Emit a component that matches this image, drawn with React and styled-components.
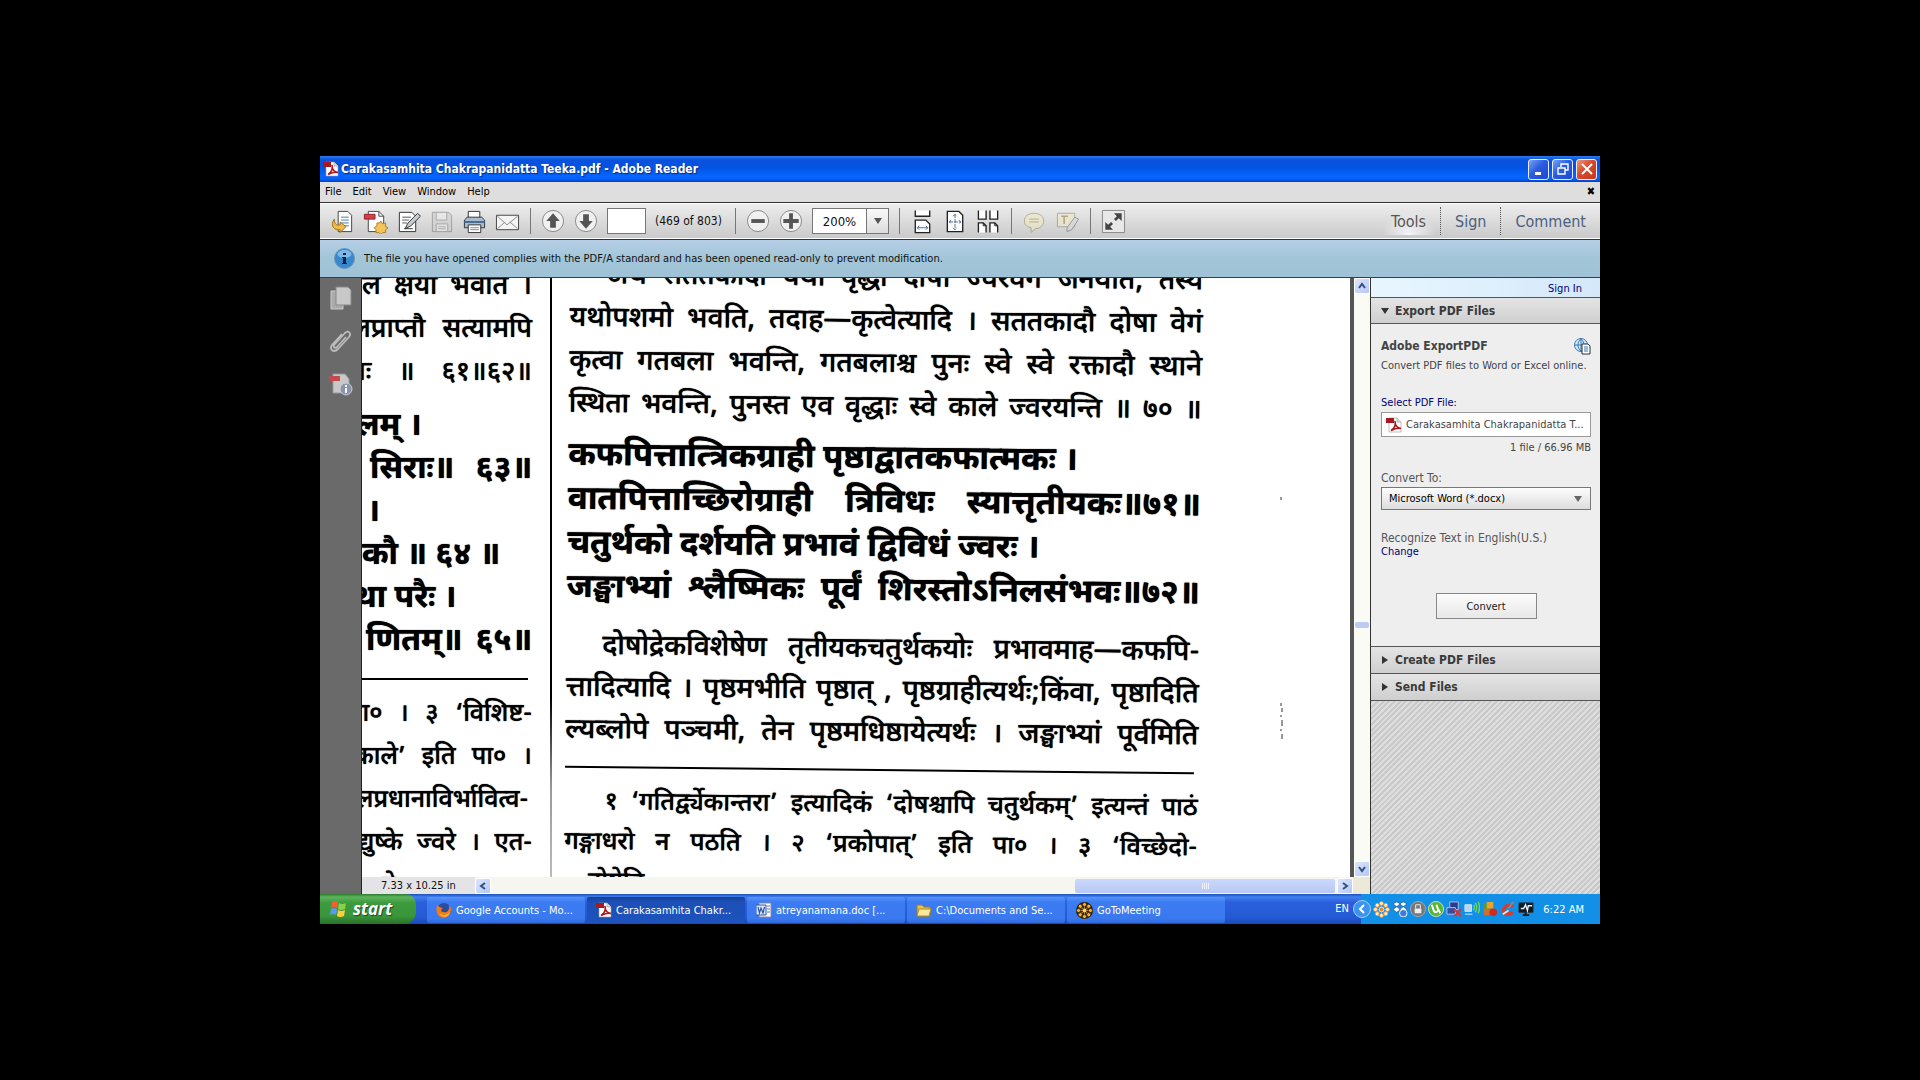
import { useState } from "react";
import styled, { createGlobalStyle } from "styled-components";

const GlobalStyle = createGlobalStyle`
    * {
        box-sizing: border-box;
    }
    body {
        margin: 0;
        background-color: #000;
        font-family: "DejaVu Sans Condensed", "DejaVu Sans", sans-serif;
        font-size: 11px;
        color: #111;
    }
    button, input, select {
        font: inherit;
        color: inherit;
        margin: 0;
    }
    p, h1, h2, h3 {
        margin: 0;
    }
`
const Desktop = styled.div`
    min-height: 100vh;
    display: flex;
    padding: 156px 320px;
`
const Screen = styled.div`
    flex: 1;
    min-width: 0;
    display: flex;
    flex-direction: column;
`

/* title bar and menu */
const TitleBar = styled.header`
    height: 26px;
    display: flex;
    align-items: center;
    gap: 2px;
    padding: 0 3px;
    color: #fff;
    background: linear-gradient(#2b7bf0 0, #0a50dc 4px, #0254e4 12px, #0565ff 20px, #0560f8 23px, #0340c0 26px);
`
const WindowTitle = styled.h1`
    flex: 1;
    font-size: 12px;
    font-weight: bold;
    text-shadow: 1px 1px 1px #0a2a80;
    white-space: nowrap;
`
const CaptionButtons = styled.div`
    display: flex;
    gap: 3px;
`
const CaptionButton = styled.button`
    width: 21px;
    height: 21px;
    padding: 0;
    display: flex;
    align-items: center;
    justify-content: center;
    border: 1px solid #e8eefc;
    border-radius: 3px;
    background: ${props => props.$close
        ? `linear-gradient(135deg, #ee9a7c, #d9482c 45%, #c23a1c)`
        : `linear-gradient(135deg, #7ba4f4, #2a5ce0 45%, #1c4ad0)`};
`
const MenuBar = styled.nav`
    height: 20px;
    display: flex;
    align-items: center;
    gap: 11px;
    padding: 0 5px 2px;
    background-color: #dedede;
`
const MenuItem = styled.button`
    padding: 0;
    border: 0;
    background-color: transparent;
    color: #000;
    &:last-child {
        margin-left: auto;
        font-weight: bold;
    }
`

/* toolbar */
const Toolbar = styled.div`
    height: 38px;
    display: flex;
    align-items: center;
    border-top: 1px solid #333;
    border-bottom: 1px solid #333;
    box-shadow: inset 0 1px #fff, inset 0 -1px #fff;
    background: linear-gradient(#eee, #c9c9c9);
    padding: 0 0 0 6px;
`
const ToolButton = styled.button`
    width: 33px;
    height: 30px;
    padding: 0;
    border: 0;
    background-color: transparent;
    display: flex;
    align-items: center;
    justify-content: center;
    opacity: ${props => props.disabled ? 0.5 : 1};
`
const Divider = styled.span`
    width: 1px;
    height: 26px;
    margin: 0 6px;
    background-color: #777;
`
const PageInput = styled.input`
    width: 39px;
    height: 26px;
    margin: 0 9px 0 4px;
    border: 1px solid #777;
    background-color: #fff;
    padding: 2px;
`
const PageCount = styled.span`
    width: 74px;
    font-size: 12px;
    white-space: nowrap;
`
const Zoom = styled.div`
    display: flex;
    height: 26px;
    margin: 0 4px 0 4px;
    border: 1px solid #777;
    background-color: #fff;
`
const ZoomInput = styled.input`
    width: 53px;
    border: 0;
    padding: 0;
    font-size: 13px;
    text-align: center;
    background-color: transparent;
`
const ZoomArrow = styled.button`
    width: 22px;
    padding: 0;
    border: 0;
    border-left: 1px solid #777;
    background: linear-gradient(#fafafa, #dcdcdc);
`
const PaneTabs = styled.div`
    display: flex;
    margin-left: auto;
`
const PaneTab = styled.button`
    height: 28px;
    padding: 0 14px;
    border: 0;
    border-left: ${props => props.$active ? `0` : `1px dotted #555`};
    font-size: 16px;
    color: ${props => props.$active ? `#555` : `#4a6080`};
    background: ${props => props.$active ? `radial-gradient(at 50% 100%, #f4f4fa, transparent 60%)` : `transparent`};
`
const InfoBar = styled.div`
    height: 38px;
    display: flex;
    align-items: center;
    gap: 9px;
    padding: 0 14px;
    white-space: nowrap;
    border-bottom: 1px solid #24445c;
    background: linear-gradient(#b6cfe6, #a2c5d8 50%, #a0c2d6);
`

/* document area */
const Workspace = styled.div`
    flex: 1;
    min-height: 0;
    display: flex;
`
const Rail = styled.aside`
    width: 42px;
    padding: 7px 0;
    display: flex;
    flex-direction: column;
    align-items: center;
    gap: 14px;
    border-right: 1px solid #222;
    background-color: #6a6a6a;
`
const RailButton = styled.button`
    width: 24px;
    height: 29px;
    padding: 0;
    border: 0;
    background-color: transparent;
`
const Viewer = styled.main`
    flex: 1;
    min-width: 0;
    display: flex;
    flex-direction: column;
`
const Canvas = styled.div`
    flex: 1;
    min-height: 0;
    display: flex;
`
const Sheet = styled.article`
    flex: 1;
    height: 599px;
    overflow: hidden;
    display: flex;
    color: #000;
    background-color: #fff;
    font-family: "Noto Sans Devanagari", "Noto Sans", "Noto Serif Devanagari", sans-serif;
    text-shadow: 0 0 1px #000;
    border-right: 4px solid #555;
`
const LeftColumn = styled.section`
    width: 188px;
    padding-right: 18px;
    overflow: hidden;
`
const Gutter = styled.div`
    width: 2px;
    background: linear-gradient(#000 70%, #999 85%, #bbb);
`
const RightColumn = styled.section`
    flex: 1;
    padding-left: 15px;
    transform: rotate(0.6deg);
`
const Block = styled.div`
    margin-top: ${props => props.$top}px;
    line-height: ${props => props.$pitch}px;
    font-size: ${props => props.$size}px;
    font-weight: ${props => props.$bold ? 700 : 500};
`
const Line = styled.p`
    display: flex;
    white-space: pre;
    justify-content: ${props => props.$start ? `flex-start` : `space-between`};
    padding-left: ${props => props.$indent || 0}px;
    margin-left: -${props => props.$bleed || 0}px;
`
const Rule = styled.hr`
    height: 2px;
    margin: ${props => props.$top}px 4px 0 0;
    border: 0;
    background-color: #000;
`
const Margin = styled.div`
    width: 150px;
    padding-left: 12px;
    display: flex;
    justify-content: center;
    align-items: flex-start;
`

/* scroll bars */
const VScroll = styled.div`
    width: 16px;
    display: flex;
    flex-direction: column;
    justify-content: space-between;
    align-items: center;
    background-color: #fbfbf6;
`
const HScroll = styled.div`
    height: 17px;
    display: flex;
    align-items: center;
    background-color: #f6f6f0;
`
const PageSize = styled.span`
    width: 113px;
    height: 17px;
    line-height: 17px;
    padding-left: 19px;
    background-color: #e4e4e6;
`
const ScrollButton = styled.button`
    width: 16px;
    height: 16px;
    padding: 0;
    display: flex;
    align-items: center;
    justify-content: center;
    border: 1px solid #fff;
    border-radius: 2px;
    background: linear-gradient(135deg, #dce6fe, #b4c8f6);
    svg {
        transform: rotate(${props => props.$turn || 0}deg);
    }
`
const VThumb = styled.div`
    width: 14px;
    height: 6px;
    margin-top: 94px;
    border-radius: 2px;
    background-color: #bccbf4;
`
const HThumb = styled.div`
    width: 260px;
    height: 14px;
    margin: 0 2px 0 auto;
    display: flex;
    align-items: center;
    justify-content: center;
    gap: 1px;
    border-radius: 2px;
    background: linear-gradient(#ccd8fc, #b8c8f4);
`
const Grip = styled.span`
    width: 1px;
    height: 6px;
    background-color: #eef2ff;
`
const Corner = styled.span`
    width: 17px;
    height: 17px;
    background-color: #ece9d8;
`

/* export pane */
const Pane = styled.aside`
    width: 230px;
    display: flex;
    flex-direction: column;
    border-left: 1px solid #333;
    background-color: #eee;
    color: #444;
`
const SignIn = styled.a`
    height: 19px;
    padding-right: 18px;
    line-height: 21px;
    text-align: right;
    text-decoration: none;
    color: #00007a;
    background: linear-gradient(90deg, #e8f6ff, #d4e8fa);
`
const PaneHeader = styled.button`
    height: 27px;
    flex-shrink: 0;
    padding: 0 10px;
    display: flex;
    align-items: center;
    gap: 6px;
    border: 0;
    border-top: 1px solid #555;
    border-bottom: ${props => props.$open ? `1px solid #555` : `0`};
    font-size: 12px;
    font-weight: bold;
    color: #3a3a3a;
    background: linear-gradient(#e4e4e4, #cfcfcf);
`
const ExportForm = styled.form`
    height: 322px;
    padding: 11px 9px 0 10px;
    display: flex;
    flex-direction: column;
`
const FormTitle = styled.h2`
    height: 22px;
    display: flex;
    align-items: center;
    justify-content: space-between;
    font-size: 12px;
`
const Hint = styled.p`
    height: 18px;
    line-height: 17px;
    white-space: nowrap;
`
const Label = styled.label`
    margin-top: ${props => props.$gap}px;
    height: 18px;
    line-height: 18px;
    font-size: ${props => props.$link ? 11 : 12}px;
    color: ${props => props.$link ? `#00007a` : `#555`};
`
const FileBox = styled.div`
    height: 25px;
    display: flex;
    align-items: center;
    gap: 4px;
    padding: 0 1px 0 4px;
    border: 1px solid #999;
    background-color: #fff;
`
const FileInput = styled.input`
    flex: 1;
    min-width: 0;
    padding: 0;
    border: 0;
    background-color: transparent;
`
const FileSize = styled.p`
    height: 20px;
    line-height: 22px;
    text-align: right;
`
const FormatSelect = styled.select`
    appearance: none;
    height: 23px;
    padding: 0 7px;
    border: 1px solid #777;
    border-radius: 0;
    color: #000;
    background: linear-gradient(#fdfdfd, #ddd);
`
const SelectWrap = styled.div`
    display: grid;
    > * {
        grid-area: 1 / 1;
    }
    svg {
        justify-self: end;
        align-self: center;
        margin-right: 9px;
        pointer-events: none;
    }
`
const Recognize = styled.p`
    margin-top: 22px;
    line-height: 13px;
    font-size: 12px;
    color: #555;
`
const ChangeLink = styled.a`
    display: block;
    font-size: 11px;
    color: #00007a;
    text-decoration: none;
`
const ConvertButton = styled.button`
    width: 101px;
    height: 26px;
    margin: 35px auto 0;
    border: 1px solid #888;
    background: linear-gradient(#fcfcfc, #e8e8e8);
    color: #222;
`
const Hatch = styled.div`
    flex: 1;
    border-top: 1px solid #555;
    background: repeating-linear-gradient(135deg, #c9c9c9 0 2px, #dedede 2px 4px);
`

/* task bar */
const Taskbar = styled.footer`
    height: 30px;
    display: flex;
    color: #fff;
    background: linear-gradient(#1c50b8 0, #3f80f0 3px, #2a60dc 8px, #2459d4 24px, #1c48b0 30px);
`
const StartButton = styled.button`
    width: 96px;
    padding: 0 0 0 10px;
    margin-right: 11px;
    display: flex;
    align-items: center;
    gap: 5px;
    border: 0;
    border-radius: 0 10px 12px 0;
    font-family: "Open Sans", "Noto Sans", sans-serif;
    font-size: 17px;
    line-height: 26px;
    font-weight: bold;
    font-style: italic;
    color: #fff;
    text-shadow: 1px 1px 1px #1c4a1c;
    background: linear-gradient(#2c7a2c 0, #5cb45c 3px, #3d9a3d 9px, #3a963a 22px, #2a702a 30px);
`
const Task = styled.button`
    width: 158px;
    height: 26px;
    margin: 3px 2px 0 0;
    padding: 0 9px;
    display: flex;
    align-items: center;
    gap: 4px;
    border: 0;
    border-radius: 2px;
    color: #fff;
    white-space: nowrap;
    background: ${props => props.$active
        ? `linear-gradient(#153f94, #1c50b8 5px, #1e52bc)`
        : `linear-gradient(#5a94fa, #3c7cf2 5px, #3a78ee 22px, #2f68dc)`};
`
const Language = styled.span`
    margin-left: auto;
    width: 18px;
    line-height: 30px;
`
const Tray = styled.div`
    display: flex;
    align-items: center;
    gap: 2px;
    padding-right: 16px;
    background: linear-gradient(90deg, transparent 8px, #1290e8 8px);
`
const Clock = styled.time`
    margin-left: 7px;
`

const PdfIcon = ({ size = 16 }) => (
    <svg width={size} height={size} viewBox="0 0 16 16">
        <path d="M3 1h8l4 4v10H3z" fill="#fff" stroke="#999" strokeWidth="0.6" />
        <path d="M11 1v4h4" fill="#ddd" stroke="#999" strokeWidth="0.6" />
        <path d="M0 1h8v5H0z" fill="#a81820" />
        <path d="M5 13.500c3-2 5-5 4-9.500 0 4 2 7 6 7.500-3-1-6 0-10 2z" fill="none" stroke="#b01820" strokeWidth="1.600" />
    </svg>
)
const Triangle = ({ right, color = "#333", size = 8 }) => (
    <svg width={size} height={size} viewBox="0 0 8 8">
        <path d={right ? "M1 0l6 4-6 4z" : "M0 1h8L4 7z"} fill={color} />
    </svg>
)
const Chevron = ({ color = "#35507c" }) => (
    <svg width="8" height="8" viewBox="0 0 8 8" fill="none" stroke={color} strokeWidth="2">
        <path d="M1 6l3-4 3 4" />
    </svg>
)

const toolIcons = {
    open: <>
        <path d="M8 2h10l4 4v17H8z" fill="#fff" stroke="#444" />
        <path d="M11 8h8M11 11h8M11 14h8M13 17h6" stroke="#4a78a8" />
        <path d="M4 10c-5 7 0 12 6 11v3l6-6-6-5v3c-4 1-6-1-6-6z" fill="#f0bc48" stroke="#a06c14" />
    </>,
    create: <>
        <path d="M5 2h11l5 5v16H5z" fill="#fff" stroke="#444" />
        <path d="M16 2v5h5" fill="none" stroke="#444" />
        <path d="M1 5h11v5H1z" fill="#d84048" stroke="#8c2028" />
        <path d="M18 12l2 3 3-1v4l3 1-3 2v3h-3l-2 2-2-2h-3v-3l-2-2 3-2v-3h3z" fill="#f2c45c" stroke="#b47c1c" />
    </>,
    edit: <>
        <path d="M3 3h13l4 4v16H3z" fill="#fff" stroke="#333" />
        <path d="M6 8h9M6 11h7M6 14h5" stroke="#555" />
        <path d="M9 20l3-6 10-10 3 3-10 10z" fill="#c4ccd4" stroke="#333" />
        <path d="M8 20h9" stroke="#333" />
    </>,
    save: <>
        <path d="M3 3h17l3 3v17H3z" fill="#ccc" stroke="#666" />
        <path d="M7 3h11v8H7zM7 15h12v8H7z" fill="#eee" stroke="#777" />
        <path d="M9 18h8M9 20h8" stroke="#888" />
    </>,
    print: <>
        <path d="M6 2h12v8H6z" fill="#fff" stroke="#333" />
        <path d="M2 11l3-3h15l3 3v8H2z" fill="#a8bccf" stroke="#333" />
        <path d="M2 13h21" stroke="#456c94" strokeWidth="2" />
        <path d="M6 16h13v8H6z" fill="#fff" stroke="#333" />
        <path d="M8 19h9M8 21h9" stroke="#888" />
    </>,
    mail: <>
        <path d="M1 6h23v15H1z" fill="#f4f4f4" stroke="#444" />
        <path d="M2 7l10 9L23 7M2 20l8-7M23 20l-8-7" fill="none" stroke="#888" />
    </>,
    up: <>
        <circle cx="12" cy="12" r="11" fill="#f0f0f0" stroke="#888" />
        <path d="M12 4l7 8h-4v7H9v-7H5z" fill="#555" />
    </>,
    down: <>
        <circle cx="12" cy="12" r="11" fill="#f0f0f0" stroke="#888" />
        <path d="M12 20l7-8h-4V5H9v7H5z" fill="#555" />
    </>,
    minus: <>
        <circle cx="12" cy="12" r="11" fill="#f0f0f0" stroke="#888" />
        <path d="M5 10h14v4H5z" fill="#555" />
    </>,
    plus: <>
        <circle cx="12" cy="12" r="11" fill="#f0f0f0" stroke="#888" />
        <path d="M10 4h4v6h6v4h-6v6h-4v-6H4v-4h6z" fill="#555" />
    </>,
    fitWidth: <>
        <path d="M5 1v6h15V1M5 24V11h11l4 4v9z" fill="#fff" stroke="#222" strokeWidth="1.400" />
        <path d="M7 19h11M9 17l-2 2 2 2M16 17l2 2-2 2" fill="none" stroke="#4a6a98" />
    </>,
    fitPage: <>
        <path d="M4 2h12l4 4v17H4z" fill="#fff" stroke="#222" strokeWidth="1.400" />
        <path d="M12 5v16M6 13h12M10 7l2-2 2 2M10 19l2 2 2-2M8 11l-2 2 2 2M16 11l2 2-2 2" fill="none" stroke="#4a6a98" strokeDasharray="4 1" />
    </>,
    twoUp: <>
        <path d="M2 1v9h8V1M14 1v9h8V1M2 24V14h5l3 3v7M14 24V14h5l3 3v7" fill="#fff" stroke="#222" strokeWidth="1.400" />
        <path d="M7 14v3h3M19 14v3h3" fill="none" stroke="#222" />
    </>,
    note: <>
        <path d="M12 4c6 0 10 3 10 8s-4 8-9 8l-4 4v-5c-4-1-7-3-7-7 0-5 4-8 10-8z" fill="#f4ecc0" stroke="#8c7c3c" />
        <path d="M7 10h10M7 13h10" stroke="#8c7c3c" />
    </>,
    highlight: <>
        <path d="M2 4h18v14H2z" fill="#f4ecc0" stroke="#777" />
        <path d="M6 7h7M9 7v8" stroke="#8c6c2c" strokeWidth="1.600" />
        <path d="M12 19l8-11 4 2-7 11-5 2z" fill="#d8d8d8" stroke="#555" />
    </>,
    full: <>
        <path d="M1 1h23v23H1z" fill="#e8e8e8" stroke="#888" />
        <path d="M13 4h8v8l-3-3-3 3-2-2 3-3zM4 13l3 3 3-3 2 2-3 3 3 3H4z" fill="#444" />
    </>,
}

function Tool({ name, label, disabled }) {
    return (
        <ToolButton type="button" aria-label={label} disabled={disabled}>
            <svg width={25} height={25} viewBox="-0.5 -0.5 26 26" fill="none">{toolIcons[name]}</svg>
        </ToolButton>
    )
}

const Flower = ({ dark }) => (
    <svg width="17" height="17" viewBox="0 0 17 17">
        {dark && <circle cx="8.5" cy="8.5" r="8.5" fill="#2a1c08" />}
        {[0, 45, 90, 135, 180, 225, 270, 315].map(a => (
            <g key={a} transform={`rotate(${a} 8.5 8.5)`}>
                <path d="M8.500 8V4" stroke={dark ? "#f4b040" : "#f08420"} />
                <circle cx="8.5" cy="2.5" r="2" fill={dark ? "#f4b040" : "#fff0d0"} stroke={dark ? "#2a1c08" : "#f08420"} strokeWidth="0.7" />
            </g>
        ))}
        <circle cx="8.5" cy="8.5" r="2.4" fill={dark ? "#fbd080" : "#f08420"} stroke={dark ? "#2a1c08" : "#fff"} strokeWidth="0.7" />
    </svg>
)

const taskIcons = {
    firefox: <>
        <circle cx="8" cy="8" r="7" fill="#2c4c9c" />
        <path d="M1 3c-1 4-1 8 2 11 5 4 12 1 12-7 0-2-1-3-2-4 1 5-2 8-5 7-4 0-3-3-1-4-2 0-4-1-6-3z" fill="#f07c1c" />
        <path d="M3 11c3 3 8 3 11-1-1 5-8 7-11 1z" fill="#fbc430" />
    </>,
    word: <>
        <path d="M3 1h12v14H3z" fill="#fff" stroke="#88a" />
        <path d="M0 3h10v10H0z" fill="#dce8fa" stroke="#2a54a8" />
        <path d="M2 5l1.500 6L5 6l2 5 1.500-6" fill="none" stroke="#2a54a8" strokeWidth="1.200" />
        <path d="M11 4h3M11 7h3M11 10h3" stroke="#4a74c8" />
    </>,
    folder: <>
        <path d="M1 3h5l2 2h6v9H1z" fill="#e8c04c" stroke="#a07c1c" />
        <path d="M3 7h12l-2 7H1z" fill="#fbe89c" stroke="#b08c2c" />
    </>,
}

const trayIcons = [
    ["Dropbox", <>
        <path d="M5 1l4 2-4 3-4-3zM12 1l4 2-4 3-4-3zM5 6l4 3-4 3-4-3zM12 6l4 3-4 3-4-3z" fill="#fff" stroke="#2a4c7c" strokeWidth="0.7" />
        <circle cx="12" cy="13" r="4" fill="#3c7cd8" stroke="#fff" />
    </>],
    ["Lock", <>
        <circle cx="8.500" cy="8.500" r="8" fill="#777" stroke="#aaa" />
        <path d="M5 8h7v5H5z" fill="#eee" />
        <path d="M6 8V4h5v4M5 10h7" fill="none" stroke="#eee" />
    </>],
    ["uTorrent", <>
        <circle cx="8.500" cy="8.500" r="8" fill="#5cb43c" stroke="#c4e4b4" />
        <path d="M4 4l2 6c1 3 4 2 5 0l-2-6M11 9l2 4" fill="none" stroke="#fff" strokeWidth="2" />
    </>],
    ["Network", <>
        <path d="M4 1h9v8H4z" fill="#2c3c8c" stroke="#b4c0e8" />
        <path d="M1 7h9v7H1z" fill="#3c4c9c" stroke="#b4c0e8" />
        <path d="M9 9l7 7M16 9l-7 7" stroke="#e03030" strokeWidth="2" />
    </>],
    ["Wireless", <>
        <path d="M1 4h7v7H1zM1 14h8" fill="#b4d4f8" stroke="#d8ecff" />
        <path d="M10 4q2 3 0 6M12 2q3 5 0 10M15 1q3 6 0 12" fill="none" stroke="#6ce04c" strokeWidth="1.400" />
    </>],
    ["Updates", <>
        <path d="M1 2h9v10H1z" fill="#4c9c3c" />
        <path d="M5 1h7v7H5z" fill="#e8a42c" />
        <path d="M2 8h6v7H2z" fill="#c8742c" />
        <circle cx="12" cy="12" r="4" fill="#d02c1c" />
    </>],
    ["Cleaner", <>
        <path d="M15 5C9 0 1 5 2 11c1 6 9 6 13 2l-3-3c-2 2-6 2-6-1 0-2 3-4 6-1z" fill="#d83c30" />
        <path d="M14 1L9 8" stroke="#888" strokeWidth="2" />
        <path d="M3 14l6-4" stroke="#e0e0e8" strokeWidth="2" />
    </>],
    ["Display", <>
        <path d="M1 2h15v10H1z" fill="#101820" stroke="#24343c" />
        <path d="M5 15h7M8 12v3" stroke="#101820" strokeWidth="2" />
        <path d="M3 8h3l2-4 2 6 1-5h4" fill="none" stroke="#e4f0f8" strokeWidth="1.500" />
    </>],
]

const tasks = [
    { title: "Google Accounts - Mo...", icon: "firefox" },
    { title: "Carakasamhita Chakr...", icon: "pdf", active: true },
    { title: "atreyanamana.doc [...", icon: "word" },
    { title: "C:\\Documents and Se...", icon: "folder" },
    { title: "GoToMeeting", icon: "flower" },
]

const leftBlocks = [
    { top: -12, pitch: 43, size: 27, lines: [
        { text: "ल क्षया भवति ।" },
        { text: "लप्राप्तौ सत्यामपि", bleed: 10 },
        { text: "तः ॥ ६१॥६२॥", bleed: 12 },
    ] },
    { top: 11, pitch: 43, size: 32, bold: true, lines: [
        { text: "लम् ।", start: true, bleed: 6 },
        { text: "सिराः॥ ६३॥", indent: 8 },
        { text: "।", start: true, indent: 5 },
        { text: "कौ ॥ ६४ ॥", start: true },
        { text: "था परैः ।", start: true, bleed: 8 },
        { text: "णितम्॥ ६५॥", indent: 4 },
    ] },
    { rule: 14 },
    { top: 14, pitch: 43, size: 25, lines: [
        { text: "पा० । ३ ‘विशिष्ट-", bleed: 14 },
        { text: "काले’ इति पा० ।", bleed: 8 },
        { text: "लप्रधानाविर्भावित्व-", bleed: 6 },
        { text: "द्युष्के ज्वरे । एत-", bleed: 4 },
        { text: "ते", start: true, indent: 20 },
    ] },
]

const rightBlocks = [
    { top: -20, pitch: 43, size: 28, lines: [
        { text: "अथ सततकादौ यथा वृद्धा दोषा ज्वरवेगं जनयति, तस्य", indent: 36 },
        { text: "यथोपशमो भवति, तदाह—कृत्वेत्यादि । सततकादौ दोषा वेगं" },
        { text: "कृत्वा गतबला भवन्ति, गतबलाश्च पुनः स्वे स्वे रक्तादौ स्थाने" },
        { text: "स्थिता भवन्ति, पुनस्त एव वृद्धाः स्वे काले ज्वरयन्ति ॥ ७० ॥" },
    ] },
    { top: 8, pitch: 44, size: 33, bold: true, lines: [
        { text: "कफपित्तात्त्रिकग्राही पृष्ठाद्वातकफात्मकः ।", start: true },
        { text: "वातपित्ताच्छिरोग्राही त्रिविधः स्यात्तृतीयकः॥७१॥" },
        { text: "चतुर्थको दर्शयति प्रभावं द्विविधं ज्वरः ।", start: true },
        { text: "जङ्घाभ्यां श्लैष्मिकः पूर्वं शिरस्तोऽनिलसंभवः॥७२॥" },
    ] },
    { top: 15, pitch: 42, size: 28, lines: [
        { text: "दोषोद्रेकविशेषेण तृतीयकचतुर्थकयोः प्रभावमाह—कफपि-", indent: 36 },
        { text: "त्तादित्यादि । पृष्ठमभीति पृष्ठात् , पृष्ठग्राहीत्यर्थः;किंवा, पृष्ठादिति" },
        { text: "ल्यब्लोपे पञ्चमी, तेन पृष्ठमधिष्ठायेत्यर्थः । जङ्घाभ्यां पूर्वमिति" },
    ] },
    { rule: 14 },
    { top: 15, pitch: 40, size: 25, lines: [
        { text: "१ ‘गतिर्द्व्येकान्तरा’ इत्यादिकं ‘दोषश्चापि चतुर्थकम्’ इत्यन्तं पाठं", indent: 40 },
        { text: "गङ्गाधरो न पठति । २ ‘प्रकोपात्’ इति पा० । ३ ‘विच्छेदो-" },
        { text: "दोषेति", start: true, indent: 24 },
    ] },
]

function Column({ blocks }) {
    return blocks.map((block, i) => block.rule
        ? <Rule key={i} $top={block.rule} />
        : (
            <Block key={i} $top={block.top} $pitch={block.pitch} $size={block.size} $bold={block.bold}>
                {block.lines.map(line => (
                    <Line key={line.text} $start={line.start} $indent={line.indent} $bleed={line.bleed}>
                        {line.start ? line.text : line.text.split(" ").map((word, n) => <span key={n}>{word}</span>)}
                    </Line>
                ))}
            </Block>
        ))
}

export default function App() {
    const [page, setPage] = useState("")
    const [zoom, setZoom] = useState("200%")
    return (
        <>
            <GlobalStyle />
            <Desktop>
                <Screen>
                    <TitleBar>
                        <PdfIcon />
                        <WindowTitle>Carakasamhita Chakrapanidatta Teeka.pdf - Adobe Reader</WindowTitle>
                        <CaptionButtons>
                            <CaptionButton aria-label="Minimize">
                                <svg width="14" height="14" viewBox="0 0 14 14"><path d="M3 10h6v3H3z" fill="#fff" /></svg>
                            </CaptionButton>
                            <CaptionButton aria-label="Restore">
                                <svg width="14" height="14" viewBox="0 0 14 14" fill="none" stroke="#fff" strokeWidth="1.400"><path d="M5 5V2h7v6H9M2 6h7v6H2z" /></svg>
                            </CaptionButton>
                            <CaptionButton aria-label="Close" $close>
                                <svg width="14" height="14" viewBox="0 0 14 14" stroke="#fff" strokeWidth="2"><path d="M2 2l10 10M12 2L2 12" /></svg>
                            </CaptionButton>
                        </CaptionButtons>
                    </TitleBar>
                    <MenuBar>
                        <MenuItem>File</MenuItem>
                        <MenuItem>Edit</MenuItem>
                        <MenuItem>View</MenuItem>
                        <MenuItem>Window</MenuItem>
                        <MenuItem>Help</MenuItem>
                        <MenuItem aria-label="Close document">✖</MenuItem>
                    </MenuBar>
                    <Toolbar>
                        <Tool name="open" label="Open" />
                        <Tool name="create" label="Create PDF" />
                        <Tool name="edit" label="Edit" />
                        <Tool name="save" label="Save" disabled />
                        <Tool name="print" label="Print" />
                        <Tool name="mail" label="Email" />
                        <Divider />
                        <Tool name="up" label="Previous page" />
                        <Tool name="down" label="Next page" />
                        <PageInput aria-label="Page" value={page} onChange={e => setPage(e.target.value)} />
                        <PageCount>(469 of 803)</PageCount>
                        <Divider />
                        <Tool name="minus" label="Zoom out" />
                        <Tool name="plus" label="Zoom in" />
                        <Zoom>
                            <ZoomInput aria-label="Zoom" value={zoom} onChange={e => setZoom(e.target.value)} />
                            <ZoomArrow aria-label="Zoom levels"><Triangle color="#555" /></ZoomArrow>
                        </Zoom>
                        <Divider />
                        <Tool name="fitWidth" label="Fit width" />
                        <Tool name="fitPage" label="Fit page" />
                        <Tool name="twoUp" label="Two pages" />
                        <Divider />
                        <Tool name="note" label="Add note" disabled />
                        <Tool name="highlight" label="Highlight" disabled />
                        <Divider />
                        <Tool name="full" label="Full screen" />
                        <PaneTabs>
                            <PaneTab $active>Tools</PaneTab>
                            <PaneTab>Sign</PaneTab>
                            <PaneTab>Comment</PaneTab>
                        </PaneTabs>
                    </Toolbar>
                    <InfoBar>
                        <svg width="21" height="21" viewBox="0 0 21 21">
                            <circle cx="10.500" cy="10.500" r="10" fill="#3a88cc" stroke="#6a94b8" />
                            <ellipse cx="10.500" cy="6" rx="7" ry="4" fill="#7cb8e8" />
                            <path d="M9 5h3v2H9zM8 9h4v6h1v1H8v-1h1v-5H8z" fill="#0c2444" />
                        </svg>
                        <span>The file you have opened complies with the PDF/A standard and has been opened read-only to prevent modification.</span>
                    </InfoBar>
                    <Workspace>
                        <Rail>
                            <RailButton aria-label="Page thumbnails">
                                <svg width="22" height="26" viewBox="0 0 22 26">
                                    <path d="M1 6h12v18H1z" fill="#aaa" stroke="#ccc" />
                                    <path d="M6 2h12l3 3v15H6z" fill="#c8c8c8" stroke="#888" />
                                </svg>
                            </RailButton>
                            <RailButton aria-label="Attachments">
                                <svg width="22" height="26" viewBox="0 0 22 26" fill="none" stroke="#bbb" strokeWidth="1.800">
                                    <path d="M16 9L7 19c-2 2-4 0-3-2L15 5c3-3 7 0 4 4L8 21c-4 4-9 1-6-4L12 6" />
                                </svg>
                            </RailButton>
                            <RailButton aria-label="Document info">
                                <svg width="24" height="26" viewBox="0 0 24 26">
                                    <path d="M4 3h12l4 5v14H4z" fill="#c8c8c8" stroke="#999" />
                                    <path d="M0 5h11v5H0z" fill="#c84850" />
                                    <circle cx="17" cy="18" r="6" fill="#8c94ac" stroke="#ccd" />
                                    <path d="M17 17v5M17 14v2" stroke="#fff" strokeWidth="2" />
                                </svg>
                            </RailButton>
                        </Rail>
                        <Viewer>
                            <Canvas>
                                <Sheet lang="sa">
                                    <LeftColumn><Column blocks={leftBlocks} /></LeftColumn>
                                    <Gutter />
                                    <RightColumn><Column blocks={rightBlocks} /></RightColumn>
                                    <Margin>
                                        <svg width="10" height="480" viewBox="0 0 10 480" fill="none" stroke="#333">
                                            <path d="M5 219v3M5 425v3M6 430v4M5 437v2M6 442v6M5 451v2M6 456v5" />
                                        </svg>
                                    </Margin>
                                </Sheet>
                                <VScroll>
                                    <ScrollButton aria-label="Scroll up"><Chevron /></ScrollButton>
                                    <VThumb />
                                    <ScrollButton aria-label="Scroll down" $turn={180}><Chevron /></ScrollButton>
                                </VScroll>
                            </Canvas>
                            <HScroll>
                                <PageSize>7.33 x 10.25 in</PageSize>
                                <ScrollButton aria-label="Scroll left" $turn={-90}><Chevron /></ScrollButton>
                                <HThumb><Grip /><Grip /><Grip /><Grip /></HThumb>
                                <ScrollButton aria-label="Scroll right" $turn={90}><Chevron /></ScrollButton>
                                <Corner />
                            </HScroll>
                        </Viewer>
                        <Pane>
                            <SignIn href="#signin">Sign In</SignIn>
                            <PaneHeader $open><Triangle />Export PDF Files</PaneHeader>
                            <ExportForm onSubmit={e => e.preventDefault()}>
                                <FormTitle>
                                    Adobe ExportPDF
                                    <svg width="17" height="17" viewBox="0 0 17 17" fill="none" stroke="#3a78b0">
                                        <circle cx="7" cy="7" r="6.500" fill="#d4e8f8" />
                                        <path d="M7 1v12M1 7h12M7 1c-4 3-4 9 0 12M7 1c4 3 4 9 0 12" />
                                        <path d="M8 6h6l2 2v8H8z" fill="#fff" stroke="#234" />
                                        <path d="M10 9h4M10 11h4M10 13h4" />
                                    </svg>
                                </FormTitle>
                                <Hint>Convert PDF files to Word or Excel online.</Hint>
                                <Label htmlFor="file" $link $gap={19}>Select PDF File:</Label>
                                <FileBox>
                                    <PdfIcon />
                                    <FileInput id="file" readOnly value="Carakasamhita Chakrapanidatta T..." />
                                </FileBox>
                                <FileSize>1 file / 66.96 MB</FileSize>
                                <Label htmlFor="format" $gap={12}>Convert To:</Label>
                                <SelectWrap>
                                    <FormatSelect id="format">
                                        <option>Microsoft Word (*.docx)</option>
                                    </FormatSelect>
                                    <Triangle color="#666" />
                                </SelectWrap>
                                <Recognize>
                                    Recognize Text in English(U.S.)
                                    <ChangeLink href="#change">Change</ChangeLink>
                                </Recognize>
                                <ConvertButton>Convert</ConvertButton>
                            </ExportForm>
                            <PaneHeader><Triangle right />Create PDF Files</PaneHeader>
                            <PaneHeader><Triangle right />Send Files</PaneHeader>
                            <Hatch />
                        </Pane>
                    </Workspace>
                    <Taskbar>
                        <StartButton>
                            <svg width="18" height="18" viewBox="0 0 18 18">
                                <path d="M2 2q3-2 6 0L7 8q-3-2-6 0z" fill="#f06030" />
                                <path d="M9 3q3 2 7 0l-1 6q-4 2-7 0z" fill="#8cd048" />
                                <path d="M1 9q3-2 6 0l-1 6q-3-2-6 0z" fill="#5c98f0" />
                                <path d="M8 10q3 2 7 0l-1 6q-4 2-7 0z" fill="#fbd040" />
                            </svg>
                            start
                        </StartButton>
                        {tasks.map(task => (
                            <Task key={task.title} $active={task.active}>
                                {task.icon === "pdf" && <PdfIcon />}
                                {task.icon === "flower" && <Flower dark />}
                                {taskIcons[task.icon] && <svg width="16" height="16" viewBox="0 0 16 16">{taskIcons[task.icon]}</svg>}
                                {task.title}
                            </Task>
                        ))}
                        <Language>EN</Language>
                        <Tray>
                            <svg width="18" height="18" viewBox="0 0 18 18">
                                <circle cx="9" cy="9" r="8.500" fill="#3c94f0" stroke="#a4d0f8" />
                                <path d="M11 5L7 9l4 4" fill="none" stroke="#fff" strokeWidth="2" />
                            </svg>
                            <Flower />
                            {trayIcons.map(([name, icon]) => (
                                <svg key={name} aria-label={name} width="16" height="16" viewBox="0 0 17 17">{icon}</svg>
                            ))}
                            <Clock>6:22 AM</Clock>
                        </Tray>
                    </Taskbar>
                </Screen>
            </Desktop>
        </>
    )
}
